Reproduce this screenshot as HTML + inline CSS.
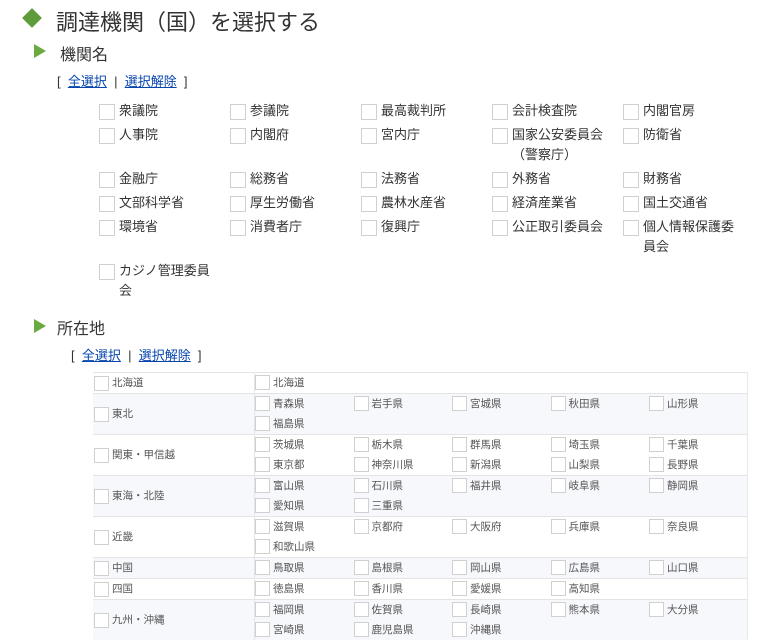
<!DOCTYPE html>
<html><head><meta charset="utf-8"><style>
body{margin:0;width:778px;height:639px;overflow:hidden;background:#fff;font-family:"Liberation Sans","Noto Sans CJK JP",sans-serif;color:#333;position:relative}
.a{position:absolute;white-space:nowrap}
.dia{position:absolute;left:25px;top:11px;width:14px;height:14px;background:#5d9b3b;transform:rotate(45deg)}
.tri{position:absolute;width:0;height:0;border-left:12px solid #6aaa40;border-top:7px solid transparent;border-bottom:7px solid transparent}
a{color:#0645ad;text-decoration:underline}
.it{position:absolute;font-size:13px;line-height:20px;color:#333}
.it i{position:absolute;left:0;top:3px;width:14px;height:14px;border:1px solid #d0d0d0;background:#fff}
.it span{display:block;margin-left:20px;width:96px;white-space:normal}
table{position:absolute;left:93px;top:372px;width:655px;border-collapse:collapse;font-size:10.5px;color:#555}
td{border-top:1px solid #e4e4e4;padding:0;vertical-align:middle}
td.l{width:160px;border-right:1px solid #e4e4e4;padding-left:1px}
tr:nth-child(even) td{background:#f7f8fc}
.cb{display:inline-block;width:13px;height:13px;border:1px solid #d0d0d0;background:#fff;vertical-align:middle;margin-right:3px}
.g{display:flex;flex-wrap:wrap}
.g div{width:98.5px;height:20px;line-height:20px;white-space:nowrap}
.g div .cb{margin-top:-2px}
</style></head><body>
<div class="dia"></div>
<div class="a" style="left:56px;top:5px;font-size:22px;color:#333">調達機関（国）を選択する</div>
<div class="tri" style="left:34px;top:44px"></div>
<div class="a" style="left:60px;top:41px;font-size:16px">機関名</div>
<div class="a" style="left:57px;top:71px;font-size:13px">[ &nbsp;<a>全選択</a> &nbsp;|&nbsp; <a>選択解除</a> &nbsp;]</div>

<div class="it" style="left:99px;top:101px"><i></i><span>衆議院</span></div>
<div class="it" style="left:230px;top:101px"><i></i><span>参議院</span></div>
<div class="it" style="left:361px;top:101px"><i></i><span>最高裁判所</span></div>
<div class="it" style="left:492px;top:101px"><i></i><span>会計検査院</span></div>
<div class="it" style="left:623px;top:101px"><i></i><span>内閣官房</span></div>
<div class="it" style="left:99px;top:125px"><i></i><span>人事院</span></div>
<div class="it" style="left:230px;top:125px"><i></i><span>内閣府</span></div>
<div class="it" style="left:361px;top:125px"><i></i><span>宮内庁</span></div>
<div class="it" style="left:492px;top:125px"><i></i><span>国家公安委員会（警察庁）</span></div>
<div class="it" style="left:623px;top:125px"><i></i><span>防衛省</span></div>
<div class="it" style="left:99px;top:169px"><i></i><span>金融庁</span></div>
<div class="it" style="left:230px;top:169px"><i></i><span>総務省</span></div>
<div class="it" style="left:361px;top:169px"><i></i><span>法務省</span></div>
<div class="it" style="left:492px;top:169px"><i></i><span>外務省</span></div>
<div class="it" style="left:623px;top:169px"><i></i><span>財務省</span></div>
<div class="it" style="left:99px;top:193px"><i></i><span>文部科学省</span></div>
<div class="it" style="left:230px;top:193px"><i></i><span>厚生労働省</span></div>
<div class="it" style="left:361px;top:193px"><i></i><span>農林水産省</span></div>
<div class="it" style="left:492px;top:193px"><i></i><span>経済産業省</span></div>
<div class="it" style="left:623px;top:193px"><i></i><span>国土交通省</span></div>
<div class="it" style="left:99px;top:217px"><i></i><span>環境省</span></div>
<div class="it" style="left:230px;top:217px"><i></i><span>消費者庁</span></div>
<div class="it" style="left:361px;top:217px"><i></i><span>復興庁</span></div>
<div class="it" style="left:492px;top:217px"><i></i><span>公正取引委員会</span></div>
<div class="it" style="left:623px;top:217px"><i></i><span>個人情報保護委員会</span></div>
<div class="it" style="left:99px;top:261px"><i></i><span>カジノ管理委員会</span></div>

<div class="tri" style="left:34px;top:319px"></div>
<div class="a" style="left:57px;top:315px;font-size:16px">所在地</div>
<div class="a" style="left:71px;top:345px;font-size:13px">[ &nbsp;<a>全選択</a> &nbsp;|&nbsp; <a>選択解除</a> &nbsp;]</div>

<table>
<tr style="height:20px"><td class="l"><span class="cb"></span>北海道</td><td><div class="g"><div><span class="cb"></span>北海道</div></div></td></tr>
<tr style="height:40px"><td class="l"><span class="cb"></span>東北</td><td><div class="g"><div><span class="cb"></span>青森県</div><div><span class="cb"></span>岩手県</div><div><span class="cb"></span>宮城県</div><div><span class="cb"></span>秋田県</div><div><span class="cb"></span>山形県</div><div><span class="cb"></span>福島県</div></div></td></tr>
<tr style="height:40px"><td class="l"><span class="cb"></span>関東・甲信越</td><td><div class="g"><div><span class="cb"></span>茨城県</div><div><span class="cb"></span>栃木県</div><div><span class="cb"></span>群馬県</div><div><span class="cb"></span>埼玉県</div><div><span class="cb"></span>千葉県</div><div><span class="cb"></span>東京都</div><div><span class="cb"></span>神奈川県</div><div><span class="cb"></span>新潟県</div><div><span class="cb"></span>山梨県</div><div><span class="cb"></span>長野県</div></div></td></tr>
<tr style="height:40px"><td class="l"><span class="cb"></span>東海・北陸</td><td><div class="g"><div><span class="cb"></span>富山県</div><div><span class="cb"></span>石川県</div><div><span class="cb"></span>福井県</div><div><span class="cb"></span>岐阜県</div><div><span class="cb"></span>静岡県</div><div><span class="cb"></span>愛知県</div><div><span class="cb"></span>三重県</div></div></td></tr>
<tr style="height:40px"><td class="l"><span class="cb"></span>近畿</td><td><div class="g"><div><span class="cb"></span>滋賀県</div><div><span class="cb"></span>京都府</div><div><span class="cb"></span>大阪府</div><div><span class="cb"></span>兵庫県</div><div><span class="cb"></span>奈良県</div><div><span class="cb"></span>和歌山県</div></div></td></tr>
<tr style="height:20px"><td class="l"><span class="cb"></span>中国</td><td><div class="g"><div><span class="cb"></span>鳥取県</div><div><span class="cb"></span>島根県</div><div><span class="cb"></span>岡山県</div><div><span class="cb"></span>広島県</div><div><span class="cb"></span>山口県</div></div></td></tr>
<tr style="height:20px"><td class="l"><span class="cb"></span>四国</td><td><div class="g"><div><span class="cb"></span>徳島県</div><div><span class="cb"></span>香川県</div><div><span class="cb"></span>愛媛県</div><div><span class="cb"></span>高知県</div></div></td></tr>
<tr style="height:40px"><td class="l"><span class="cb"></span>九州・沖縄</td><td><div class="g"><div><span class="cb"></span>福岡県</div><div><span class="cb"></span>佐賀県</div><div><span class="cb"></span>長崎県</div><div><span class="cb"></span>熊本県</div><div><span class="cb"></span>大分県</div><div><span class="cb"></span>宮崎県</div><div><span class="cb"></span>鹿児島県</div><div><span class="cb"></span>沖縄県</div></div></td></tr>
</table>
<div style="position:absolute;left:747px;top:372px;width:1px;height:267px;background:#e8e8e8"></div>
</body></html>
